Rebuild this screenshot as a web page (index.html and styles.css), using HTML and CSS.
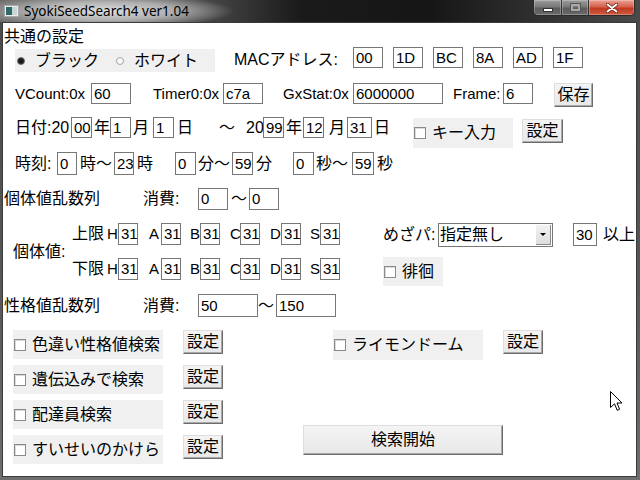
FILE: index.html
```html
<!DOCTYPE html>
<html lang="ja">
<head>
<meta charset="utf-8">
<title>SyokiSeedSearch4 ver1.04</title>
<link rel="stylesheet" href="styles.css">
</head>
<body>
<div class="window">
  <div class="titlebar">
    <svg class="appicon" width="15" height="12" viewBox="0 0 15 12">
      <rect x="0.5" y="0.5" width="14" height="11" fill="#ececec" stroke="#a8a8a8"/>
      <rect x="2" y="2" width="6" height="8" fill="#2f6a6a"/>
      <rect x="8" y="2" width="5" height="8" fill="#c9d6d6"/>
    </svg>
    <span class="title">SyokiSeedSearch4 ver1.04</span>
    <div class="caption">
      <div class="cbtn cmin"><span class="g-min"></span></div>
      <div class="cbtn cmax"><span class="g-max"></span></div>
      <div class="cbtn cclose">
        <svg width="12" height="10" viewBox="0 0 12 10"><path d="M1.5 1.5 L10.5 8.5 M10.5 1.5 L1.5 8.5" stroke="#5a1a10" stroke-width="3.4" stroke-linecap="round"/><path d="M1.5 1.5 L10.5 8.5 M10.5 1.5 L1.5 8.5" stroke="#ffffff" stroke-width="2" stroke-linecap="round"/></svg>
      </div>
    </div>
  </div>

  <div class="client">
    <div class="sec-title">共通の設定</div>

    <div class="row r21">
      <div class="panel radiopanel ml12">
        <div class="opt w99"><span class="radio on"></span><span class="opt-txt">ブラック</span></div>
        <div class="opt w99"><span class="radio"></span><span class="opt-txt">ホワイト</span></div>
      </div>
      <span class="lb maclabel ml19 w119">MACアドレス:</span>
      <span class="tb w30">00</span>
      <span class="tb w30 ml10">1D</span>
      <span class="tb w30 ml10">BC</span>
      <span class="tb w30 ml10">8A</span>
      <span class="tb w30 ml10">AD</span>
      <span class="tb w30 ml10">1F</span>
    </div>

    <div class="row r21 mt11">
      <span class="lb lat ml12 w76">VCount:0x</span>
      <span class="tb w40">60</span>
      <span class="lb lat ml22 w70">Timer0:0x</span>
      <span class="tb w40">c7a</span>
      <span class="lb lat ml20 w70">GxStat:0x</span>
      <span class="tb w90">6000000</span>
      <span class="lb lat ml10 w50">Frame:</span>
      <span class="tb w30">6</span>
      <span class="btn ml21 w39 h24">保存</span>
    </div>

    <div class="row r21 mt10">
      <span class="lb ml12 w56">日付:20</span>
      <span class="tb w21">00</span>
      <span class="lb w18 pl2">年</span>
      <span class="tb w21">1</span>
      <span class="lb w22 pl2">月</span>
      <span class="tb w21">1</span>
      <span class="lb w45 pl3">日</span>
      <span class="lb w27">～</span>
      <span class="lb w17">20</span>
      <span class="tb w21">99</span>
      <span class="lb w19 pl2">年</span>
      <span class="tb w21">12</span>
      <span class="lb w23 pl5">月</span>
      <span class="tb w25">31</span>
      <span class="lb w41 pl2">日</span>
      <div class="panel w100 h30 mt1"><span class="cb"></span><span class="ptxt">キー入力</span></div>
      <span class="btn ml9 w41 h24 mt2">設定</span>
    </div>

    <div class="row r23 mt4">
      <span class="lb ml12 w42">時刻:</span>
      <span class="tb w20">0</span>
      <span class="lb w37 pl3">時～</span>
      <span class="tb w20">23</span>
      <span class="lb w41 pl3">時</span>
      <span class="tb w21">0</span>
      <span class="lb w36 pl2">分～</span>
      <span class="tb w21">59</span>
      <span class="lb w40 pl3">分</span>
      <span class="tb w21">0</span>
      <span class="lb w38 pl2">秒～</span>
      <span class="tb w22">59</span>
      <span class="lb pl3">秒</span>
    </div>

    <div class="row r22 mt13">
      <span class="lb ml1 w139">個体値乱数列</span>
      <span class="lb w55">消費:</span>
      <span class="tb w30">0</span>
      <span class="lb w21 pl3">～</span>
      <span class="tb w30">0</span>
    </div>

    <div class="row mt13">
      <div class="ivleft">
        <span class="lb ml10 w59">個体値:</span>
        <div class="ivrows">
          <div class="row r22">
            <span class="lb w35">上限</span>
            <span class="lb lat w11">H</span><span class="tb w20">31</span>
            <span class="lb lat w23 pl11">A</span><span class="tb w20">31</span>
            <span class="lb lat w19 pl9">B</span><span class="tb w20">31</span>
            <span class="lb lat w20 pl10">C</span><span class="tb w20">31</span>
            <span class="lb lat w21 pl10">D</span><span class="tb w20">31</span>
            <span class="lb lat w19 pl9">S</span><span class="tb w20">31</span>
          </div>
          <div class="row r22">
            <span class="lb w35">下限</span>
            <span class="lb lat w11">H</span><span class="tb w20">31</span>
            <span class="lb lat w23 pl11">A</span><span class="tb w20">31</span>
            <span class="lb lat w19 pl9">B</span><span class="tb w20">31</span>
            <span class="lb lat w20 pl10">C</span><span class="tb w20">31</span>
            <span class="lb lat w21 pl10">D</span><span class="tb w20">31</span>
            <span class="lb lat w19 pl9">S</span><span class="tb w20">31</span>
          </div>
        </div>
      </div>
      <div class="mezapa ml43">
        <div class="row r23">
          <span class="lb w55 lh24">めざパ:</span>
          <div class="select w115">
            <span class="sel-txt">指定無し</span>
            <span class="sel-arrow"><span class="tri"></span></span>
          </div>
          <span class="tb ml20 w24">30</span>
          <span class="lb ml6">以上</span>
        </div>
        <div class="panel w60 h29 mt10"><span class="cb"></span><span class="ptxt">徘徊</span></div>
      </div>
    </div>

    <div class="row r23 mt8">
      <span class="lb ml1 w139">性格値乱数列</span>
      <span class="lb w55">消費:</span>
      <span class="tb w60">50</span>
      <span class="lb w18">～</span>
      <span class="tb w60">150</span>
    </div>

    <div class="row mt13">
      <div class="leftcol ml10">
        <div class="row">
          <div class="panel w150 h29"><span class="cb"></span><span class="ptxt">色違い性格値検索</span></div>
          <span class="btn ml20 w40 h24">設定</span>
        </div>
        <div class="row">
          <div class="panel w150 h29"><span class="cb"></span><span class="ptxt">遺伝込みで検索</span></div>
          <span class="btn ml20 w40 h24">設定</span>
        </div>
        <div class="row">
          <div class="panel w150 h29"><span class="cb"></span><span class="ptxt">配達員検索</span></div>
          <span class="btn ml20 w40 h24">設定</span>
        </div>
        <div class="row">
          <div class="panel w150 h29"><span class="cb"></span><span class="ptxt">すいせいのかけら</span></div>
          <span class="btn ml20 w40 h24">設定</span>
        </div>
      </div>
      <div class="rightcol ml80">
        <div class="row">
          <div class="panel ml30 w150 h30"><span class="cb"></span><span class="ptxt">ライモンドーム</span></div>
          <span class="btn ml20 w40 h24">設定</span>
        </div>
        <span class="btn w200 h30 mt65">検索開始</span>
      </div>
    </div>
  </div>

  <svg class="cursor" width="13" height="21" viewBox="0 0 13 21">
    <path d="M0.5 0.5 L0.5 16.5 L4.5 12.8 L7.2 19.3 L9.6 18.3 L7 12 L12 12 Z" fill="#ffffff" stroke="#000000" stroke-width="1" stroke-linejoin="miter"/>
  </svg>
</div>
</body>
</html>
```

FILE: styles.css
```css
* { box-sizing: border-box; }
html, body { margin: 0; padding: 0; }
body { width: 640px; height: 480px; overflow: hidden; background: #555; }

.window {
  position: relative;
  width: 640px;
  height: 480px;
  display: flex;
  flex-direction: column;
  background: linear-gradient(180deg, #4a4a4a 0%, #575757 60%, #6e6e6e 100%);
}

/* title bar */
.titlebar {
  height: 22px;
  flex-shrink: 0;
  display: flex;
  align-items: flex-start;
  background:
    radial-gradient(ellipse 130px 17px at 104px 11px, rgba(230,230,230,0.95) 0%, rgba(200,200,200,0.75) 55%, rgba(140,140,140,0) 100%),
    linear-gradient(90deg, #6c6c6c 0px, #5a5a5a 170px, #1a1a1a 300px, #161616 430px, #2c2c2c 520px, #4a4a4a 640px);
}
.appicon { margin: 5px 0 0 4px; flex-shrink: 0; }
.title {
  margin: 2px 0 0 5px;
  font: 13.5px/18px "Noto Sans", "DejaVu Sans", sans-serif;
  color: #000;
  white-space: nowrap;
}
.caption {
  margin-left: auto;
  margin-right: 5px;
  display: flex;
  height: 16px;
  border: 1px solid #2a2a2a;
  border-top: 0;
  border-radius: 0 0 5px 5px;
  overflow: hidden;
}
.cbtn {
  height: 15px;
  display: flex;
  align-items: center;
  justify-content: center;
  box-shadow: inset 0 0 0 1px rgba(255,255,255,0.25);
}
.cmin { width: 28px; background: linear-gradient(180deg, #9c9c9c 0%, #787878 45%, #5c5c5c 55%, #6a6a6a 100%); border-right: 1px solid #333; }
.cmax { width: 27px; background: linear-gradient(180deg, #9c9c9c 0%, #787878 45%, #5c5c5c 55%, #6a6a6a 100%); border-right: 1px solid #333; }
.cclose { width: 45px; background: linear-gradient(180deg, #e9a194 0%, #d6614c 45%, #c03a22 55%, #cf5a3e 100%); }
.g-min { width: 10px; height: 4px; margin-top: 5px; background: #fff; border: 1px solid #333; }
.g-max { width: 9px; height: 7px; border: 2px solid #a8a8a8; box-shadow: 0 0 0 1px #555; }

/* client area */
.client {
  flex: 1;
  margin: 0 3px 3px 2px;
  border: 1px solid #3a3a3a;
  background: #fff;
  font-family: "Liberation Sans", "Noto Sans CJK JP", sans-serif;
  font-size: 16px;
  line-height: 20px;
  color: #000;
  display: flex;
  flex-direction: column;
  overflow: hidden;
}
.sec-title { margin: 4px 0 0 1px; line-height: 20px; height: 20px; }

.row { display: flex; align-items: flex-start; flex-shrink: 0; white-space: nowrap; }
.lb { display: block; flex-shrink: 0; white-space: nowrap; }
.lat { font-size: 15px; }
.r21 .lb { line-height: 21px; }
.r22 .lb { line-height: 22px; }
.r23 .lb { line-height: 23px; }
.maclabel { line-height: 25px !important; }
.lh24 { line-height: 24px !important; }

.tb {
  display: block;
  flex-shrink: 0;
  height: 21px;
  border: 1px solid #777;
  background: #fff;
  padding-left: 2px;
  font-size: 15px;
  line-height: 19px;
  overflow: hidden;
  white-space: nowrap;
}
.r22 .tb { height: 22px; line-height: 20px; }
.r23 .tb { height: 23px; line-height: 21px; }

.btn {
  display: flex;
  align-items: center;
  justify-content: center;
  flex-shrink: 0;
  background: linear-gradient(180deg, #f4f4f4 0%, #e8e8e8 100%);
  border: 1px solid;
  border-color: #dedede #6c6c6c #6c6c6c #dedede;
  box-shadow: inset -1px -1px 0 #a9a9a9;
  line-height: 20px;
}

.panel {
  display: flex;
  align-items: center;
  flex-shrink: 0;
  background: #f0f0f0;
  padding-left: 1px;
}
.cb {
  width: 12px;
  height: 12px;
  flex-shrink: 0;
  border: 1px solid #8a8a8a;
  background: #fff;
  box-shadow: inset 1px 1px 0 #dadada;
}
.ptxt { margin-left: 6px; line-height: 20px; }

.radiopanel { width: 200px; height: 23px; margin-top: 2px; padding-left: 2px; }
.opt { display: flex; align-items: center; flex-shrink: 0; }
.radio {
  width: 8px;
  height: 8px;
  border-radius: 50%;
  border: 1px solid #a4a4a4;
  background: #fafafa;
  flex-shrink: 0;
}
.radio.on { background: #1a1a1a; border-color: #777; box-shadow: none; }
.opt-txt { margin-left: 10px; line-height: 20px; }

.ivleft { display: flex; align-items: center; flex-shrink: 0; }
.ivrows { display: flex; flex-direction: column; gap: 13px; }
.mezapa { display: flex; flex-direction: column; flex-shrink: 0; }

.select {
  display: flex;
  flex-shrink: 0;
  height: 24px;
  border: 1px solid #777;
  background: #fff;
}
.sel-txt { flex: 1; padding-left: 1px; line-height: 22px; }
.sel-arrow {
  width: 15px;
  margin: 1px;
  background: linear-gradient(180deg, #f2f2f2, #dedede);
  border-right: 1px solid #8a8a8a;
  border-bottom: 1px solid #8a8a8a;
  display: flex;
  align-items: center;
  justify-content: center;
}
.tri { width: 0; height: 0; border-left: 3px solid transparent; border-right: 3px solid transparent; border-top: 3px solid #000; }

.leftcol { display: flex; flex-direction: column; gap: 6px; flex-shrink: 0; }
.rightcol { display: flex; flex-direction: column; align-items: flex-start; flex-shrink: 0; }

.cursor { position: absolute; left: 610px; top: 391px; }

/* sizes */
.w11 { width: 11px; } .w17 { width: 17px; } .w18 { width: 18px; } .w19 { width: 19px; }
.w20 { width: 20px; } .w21 { width: 21px; } .w22 { width: 22px; } .w23 { width: 23px; }
.w24 { width: 24px; } .w25 { width: 25px; } .w27 { width: 27px; } .w30 { width: 30px; }
.w35 { width: 35px; } .w36 { width: 36px; } .w37 { width: 37px; } .w38 { width: 38px; }
.w39 { width: 39px; } .w40 { width: 40px; } .w41 { width: 41px; } .w42 { width: 42px; }
.w45 { width: 45px; } .w50 { width: 50px; } .w55 { width: 55px; } .w56 { width: 56px; }
.w59 { width: 59px; } .w60 { width: 60px; } .w70 { width: 70px; } .w76 { width: 76px; }
.w90 { width: 90px; } .w99 { width: 99px; } .w100 { width: 100px; } .w115 { width: 115px; }
.w119 { width: 119px; } .w139 { width: 139px; } .w150 { width: 150px; } .w200 { width: 200px; }
.h24 { height: 24px; } .h29 { height: 29px; } .h30 { height: 30px; }
.pl2 { padding-left: 2px; } .pl3 { padding-left: 3px; } .pl5 { padding-left: 5px; }
.pl9 { padding-left: 9px; } .pl10 { padding-left: 10px; } .pl11 { padding-left: 11px; }
.ml1 { margin-left: 1px; } .ml6 { margin-left: 6px; } .ml9 { margin-left: 9px; }
.ml10 { margin-left: 10px; } .ml12 { margin-left: 12px; } .ml19 { margin-left: 19px; }
.ml20 { margin-left: 20px; } .ml21 { margin-left: 21px; } .ml22 { margin-left: 22px; }
.ml30 { margin-left: 30px; } .ml43 { margin-left: 43px; } .ml80 { margin-left: 80px; }
.mt1 { margin-top: 1px; } .mt2 { margin-top: 2px; } .mt4 { margin-top: 4px; }
.mt8 { margin-top: 8px; } .mt10 { margin-top: 10px; } .mt11 { margin-top: 11px; }
.mt13 { margin-top: 13px; } .mt65 { margin-top: 65px; }
```
